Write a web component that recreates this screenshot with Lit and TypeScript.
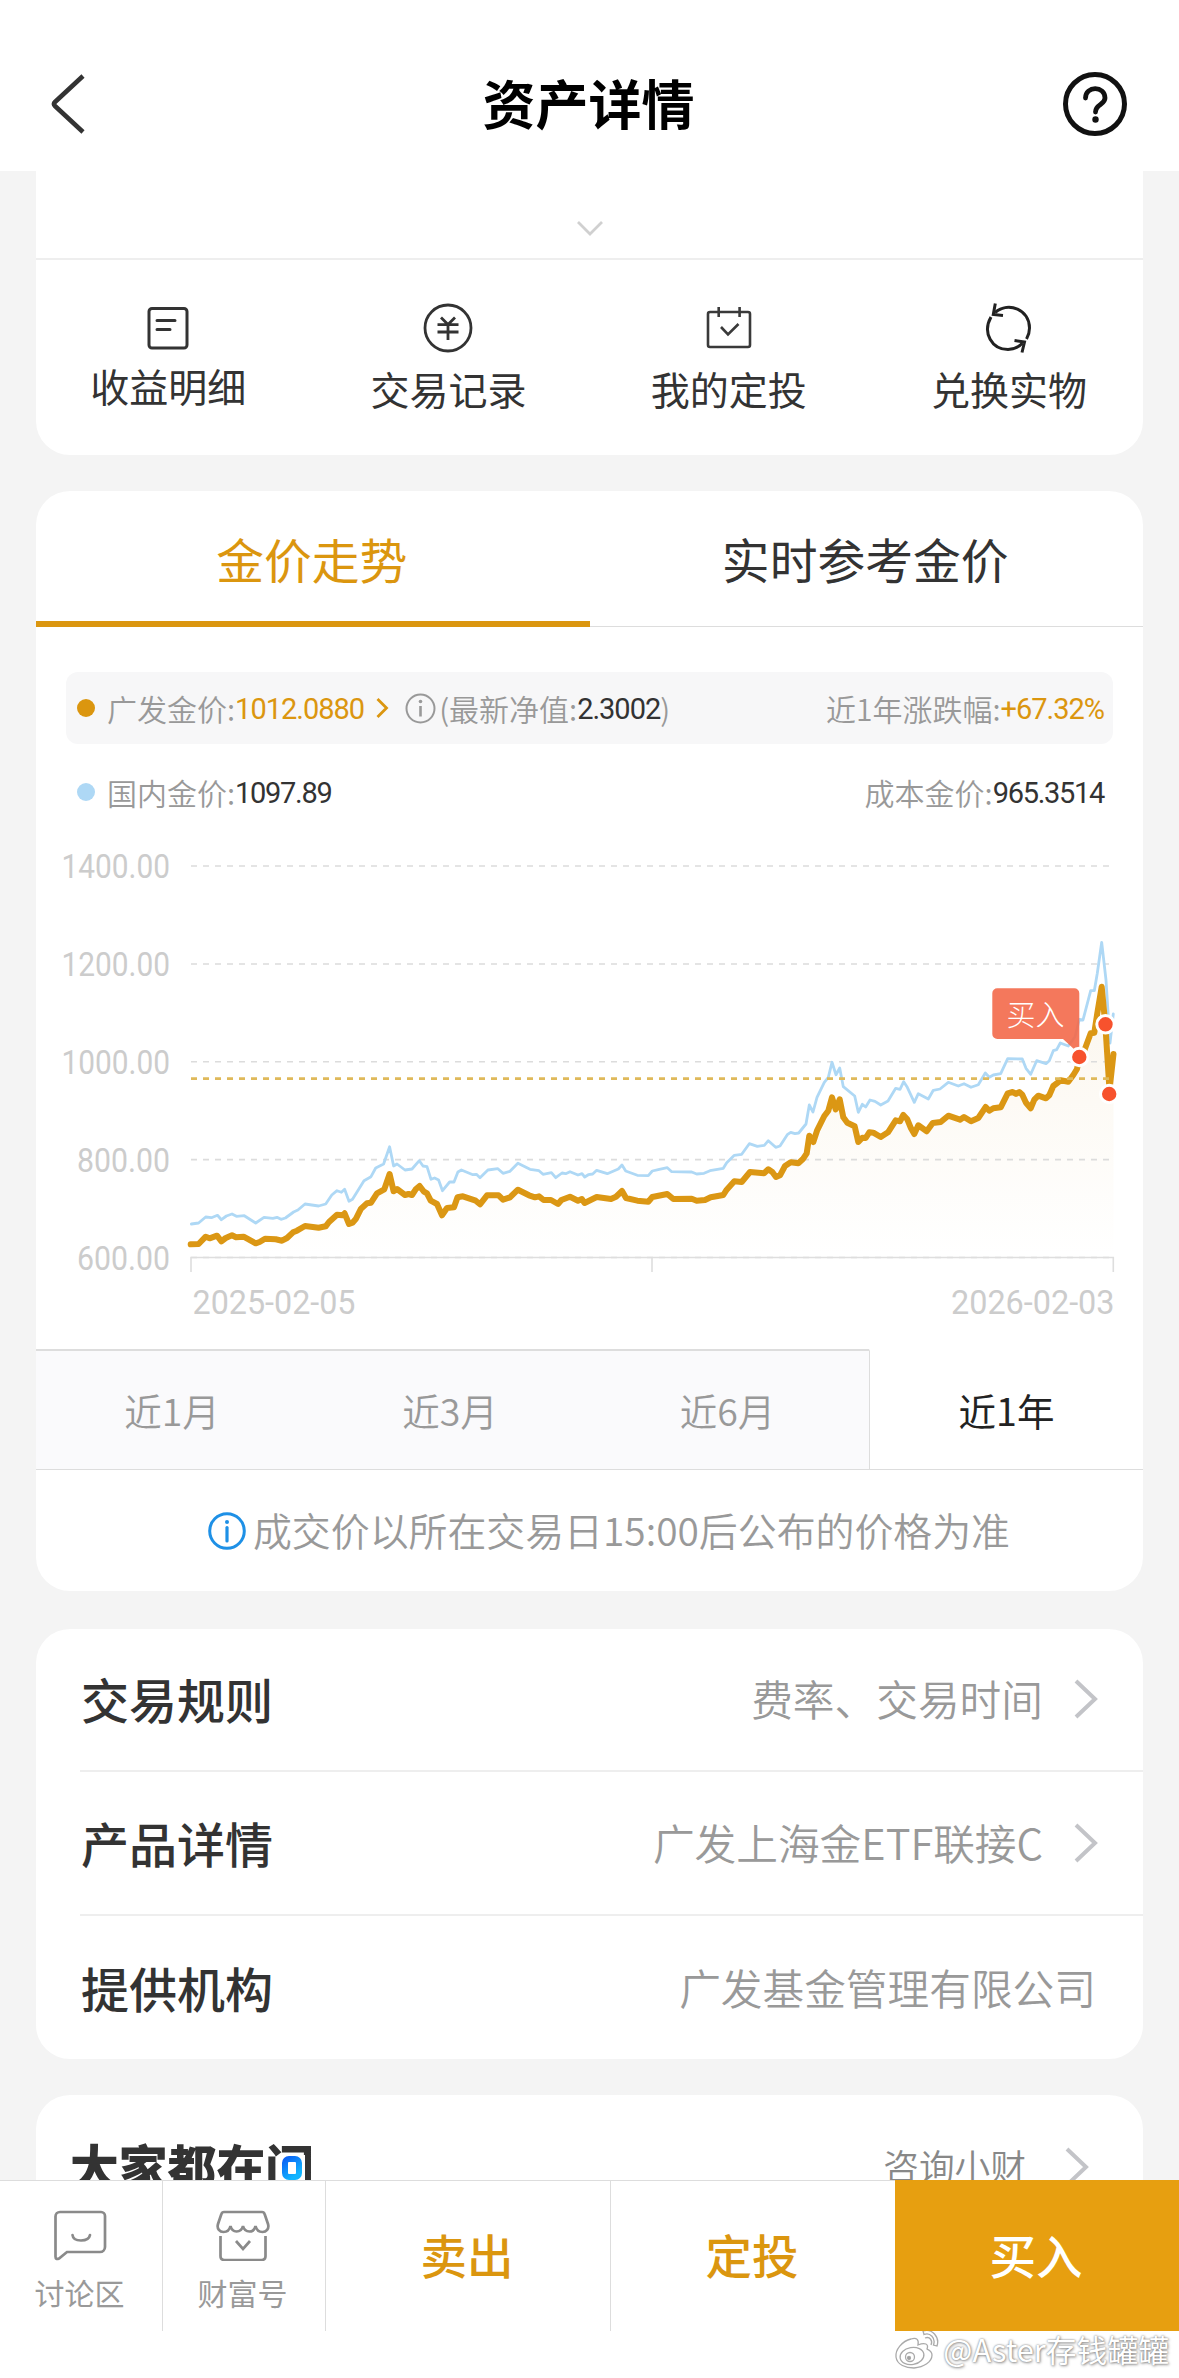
import { LitElement, html, svg, css } from "lit";
import { customElement } from "lit/decorators.js";

type Point = [number, number];

const toPoints = (flat: number[]): Point[] => {
  const out: Point[] = [];
  for (let i = 0; i < flat.length; i += 2) out.push([flat[i], flat[i + 1]]);
  return out;
};

const domestic = toPoints([
  191.4, 1224, 198.6, 1223, 205.7, 1217, 211.4, 1217.7, 217.5, 1215.3, 221.4, 1219.7, 226.4, 1216, 232, 1214,
  236.4, 1216.3, 244.3, 1215.7, 255.7, 1223, 264, 1217.3, 272.9, 1218.3, 277, 1217.3, 281, 1219.3, 285.4, 1218,
  293.6, 1212, 297.9, 1210, 305, 1204, 318.6, 1206, 325.7, 1204, 331.8, 1195, 337, 1190.7, 341.4, 1192.3,
  344.6, 1189.3, 349, 1201.3, 352.5, 1199.3, 364, 1180.7, 371, 1176.7, 375.7, 1168, 383.6, 1164, 389.6, 1146.7,
  393.6, 1166, 397, 1164, 405, 1170, 412, 1169, 419.3, 1160.7, 423, 1166, 427, 1166.7, 431, 1179.3,
  434.6, 1178, 438.6, 1180, 442.5, 1190.7, 449.6, 1182, 454, 1182, 457.9, 1172, 461.4, 1170, 472.9, 1174.7,
  476.4, 1174.3, 480, 1177.7, 487.9, 1170, 497.9, 1168.7, 503, 1173.3, 510, 1171.3, 517.9, 1163.3, 530, 1169.3,
  539, 1170.7, 543, 1174.3, 551.4, 1172.7, 555.7, 1177.7, 562, 1173, 565.7, 1173.7, 570, 1171.7, 578, 1175,
  582, 1173.7, 584.7, 1177, 588.3, 1174.7, 592.7, 1174, 596.7, 1170.3, 607.3, 1173.7, 618.3, 1169, 622, 1165,
  625.7, 1171, 637.3, 1175.3, 648.3, 1175.7, 652.3, 1171, 659.3, 1169.3, 667.3, 1167.7, 671.7, 1171.7,
  691.7, 1172, 696.7, 1174, 704, 1173.3, 710, 1170.7, 723.3, 1168.3, 726.7, 1162.7, 734.3, 1155.3,
  741.7, 1154.3, 749.3, 1143.7, 757.3, 1146.3, 764.3, 1145.3, 768.3, 1140.7, 775.7, 1147.3, 780, 1146,
  787.3, 1134.7, 790.7, 1132.3, 795, 1133.7, 798.7, 1133, 806, 1124, 809.3, 1105, 813, 1112, 817, 1097.3,
  824.3, 1082.3, 828.3, 1077.3, 832, 1062.3, 836, 1074.7, 839.7, 1068, 843.3, 1086.7, 854.7, 1096,
  858.3, 1112.3, 862.3, 1104.3, 865.7, 1107, 870, 1100, 875, 1101.3, 880.7, 1105, 888, 1101, 895.7, 1088.3,
  900, 1089.3, 903.7, 1081.7, 907.3, 1087.3, 914.3, 1102.3, 918.3, 1093.7, 928.3, 1099, 933.3, 1090.3,
  940, 1089, 948.3, 1082.3, 958.3, 1086, 964, 1083.7, 971, 1087.3, 978.3, 1084.7, 985.3, 1073, 989.3, 1077.3,
  993.3, 1075, 1000.7, 1073.7, 1007.7, 1058.7, 1022.3, 1059, 1026, 1068.3, 1030.7, 1074.3, 1036.7, 1060.7,
  1046, 1063.7, 1049.3, 1060.7, 1053.3, 1050.7, 1056.7, 1049.7, 1060.3, 1043, 1068.3, 1046, 1075, 1036.7,
  1079.3, 1019.3, 1083, 1020, 1090.7, 990.7, 1094.3, 990.7, 1097.3, 973.3, 1101.7, 942.3, 1106, 980,
  1110, 1043, 1113.3, 1014,
]);

const fund = toPoints([
  190.7, 1244.3, 198.6, 1244, 205.7, 1236.7, 209.6, 1238.3, 217, 1235.7, 221.4, 1241.3, 225.7, 1238, 232, 1235.3,
  236, 1237.3, 243.6, 1236.7, 255.7, 1243.3, 259.6, 1242, 265, 1238.7, 275.7, 1239.3, 282, 1240.7, 287, 1238,
  293, 1232.3, 297, 1230.7, 305, 1226, 318.6, 1227.7, 325.7, 1226.3, 329, 1222, 337, 1214.7, 342.5, 1215.3,
  344.6, 1213.3, 349, 1224, 352.5, 1222.7, 356, 1218.7, 361, 1208.7, 367, 1203.3, 371, 1202.7, 377, 1193.3,
  384.3, 1189.3, 389.6, 1174, 393.6, 1191.3, 397, 1189, 405, 1195, 408.6, 1194, 412, 1195, 415.7, 1189.3,
  419.6, 1186, 423.6, 1191.3, 427, 1193.3, 430.7, 1200.7, 437, 1204, 442, 1215.3, 447, 1208, 454, 1207.3,
  457.5, 1197.3, 462.9, 1196.3, 475.7, 1200.7, 480, 1204.3, 487, 1195.3, 498.6, 1195.3, 503, 1199.7,
  510, 1197.3, 517.9, 1189.7, 529, 1195.3, 535, 1197.3, 539, 1196.3, 543.6, 1200, 551, 1200, 558, 1204,
  561.4, 1200, 570, 1196.7, 578, 1200.7, 581.8, 1199, 584.6, 1203, 596.7, 1197, 611, 1199, 616, 1196.7,
  622, 1191, 626, 1198, 637.3, 1200.7, 648.3, 1201.7, 652.3, 1197, 667.3, 1194, 673.3, 1199, 691.7, 1198.7,
  696.7, 1200.7, 705, 1200, 710.7, 1197.3, 723.3, 1195, 726.7, 1189.7, 734.3, 1181.3, 741.7, 1182, 750, 1172,
  764, 1173.3, 768.3, 1169.3, 772.3, 1172, 776, 1177, 780, 1175.3, 785, 1166, 790.7, 1162.3, 798.3, 1163.3,
  802.7, 1159.3, 806.7, 1153.3, 809.3, 1135.7, 813.3, 1142, 817, 1130.7, 824.3, 1116, 828.3, 1110.7,
  832, 1097.3, 835.7, 1109.3, 839.7, 1099.3, 843.3, 1117.3, 847.3, 1122.7, 854.7, 1126.3, 858.3, 1142,
  862.3, 1137.7, 865.7, 1138, 869.3, 1132.3, 873.3, 1132.7, 880.7, 1137, 888, 1132.3, 895.7, 1120.3,
  900, 1121.3, 903.3, 1115, 907.3, 1119.3, 911, 1128.3, 914.3, 1134, 918.3, 1125.3, 926.7, 1131.3,
  932.7, 1123, 940.7, 1122, 948.3, 1115.7, 960, 1119.7, 964, 1117, 971, 1121.3, 978.3, 1118, 985.7, 1107,
  989.3, 1110.7, 993.3, 1108.3, 1000.7, 1107.3, 1007.7, 1093.3, 1012.7, 1092, 1016, 1094, 1019.3, 1092,
  1022.3, 1094.7, 1026, 1102.7, 1030.7, 1108.3, 1034.3, 1099.7, 1038.3, 1095.7, 1046, 1098.3, 1049.3, 1095.3,
  1053.3, 1086, 1060.7, 1080.3, 1068.3, 1081.7, 1073.3, 1075, 1077, 1069, 1079.3, 1056.7, 1083.3, 1053.3,
  1090.7, 1033.3, 1094.3, 1032.7, 1097.3, 1013.3, 1101.7, 986.7, 1105.3, 1024.3, 1109.5, 1090, 1113.5, 1054,
]);

const join = (pts: Point[]) => pts.map((p) => p.join(",")).join(" ");

const arrow = html`<svg class="arrow" width="26" height="40" viewBox="0 0 26 40">
  <path d="M3 2 L22 20 L3 38" fill="none" stroke="#c3c4c8" stroke-width="4" />
</svg>`;

@customElement("price-chart")
export class PriceChart extends LitElement {
  static styles = css`
    :host { display: block; }
    svg { display: block; }
    .axis { font-family: Roboto, "Noto Sans CJK SC", sans-serif; font-size: 33px; fill: #ccc; }
    .tip { font-family: "Noto Sans CJK SC", sans-serif; font-size: 29px; font-weight: 300; fill: #fff; }
  `;

  render() {
    const grid: [number, string, number][] = [
      [866, "1400.00", 108.5], [964, "1200.00", 108.5], [1061.7, "1000.00", 108.5], [1159.6, "800.00", 93], [1257.5, "600.00", 93],
    ];
    const marks: Point[] = [[1079.3, 1057], [1105.5, 1024.3], [1109.2, 1094]];
    return html`<svg width="1107" height="518" viewBox="36 832 1107 518">
      <defs>
        <linearGradient id="fade" gradientUnits="userSpaceOnUse" x1="0" y1="990" x2="0" y2="1257">
          <stop offset="0" stop-color="#d9a03d" stop-opacity="0.09" />
          <stop offset="1" stop-color="#d9a03d" stop-opacity="0" />
        </linearGradient>
      </defs>
      <polygon points="191,1257 ${join(fund)} 1113.5,1257" fill="url(#fade)" />
      ${grid.map(([y, label, w]) => svg`
        <line x1="191" x2="1110" y1=${y} y2=${y} stroke="#dcdcdc" stroke-width="1.6" stroke-dasharray="6 6" />
        <text class="axis" x=${170 - w} y=${y + 12.3} textLength=${w} lengthAdjust="spacingAndGlyphs">${label}</text>`)}
      <path d="M191 1272 V1257.5 H1113.3 V1272 M652 1257.5 V1272" fill="none" stroke="#dedede" stroke-width="1.6" />
      <polyline points=${join(domestic)} fill="none" stroke="#aed8f5" stroke-width="2.8" stroke-linejoin="round" stroke-linecap="round" />
      <polyline points=${join(fund)} fill="none" stroke="#db9714" stroke-width="6" stroke-linejoin="round" stroke-linecap="round" />
      <line x1="191" x2="1110" y1="1078.7" y2="1078.7" stroke="#dfb95a" stroke-width="2.8" stroke-dasharray="6 6" />
      <text class="axis" x="192.5" y="1313.5" textLength="163" lengthAdjust="spacingAndGlyphs">2025-02-05</text>
      <text class="axis" x="951" y="1313.5" textLength="163.5" lengthAdjust="spacingAndGlyphs">2026-02-03</text>
      <path d="M997.3 988.3 H1074.3 a5 5 0 0 1 5 5 V1054 L1063 1039 H997.3 a5 5 0 0 1 -5 -5 V993.3 a5 5 0 0 1 5 -5 Z" fill="#f3694a" fill-opacity="0.9" />
      <text class="tip" x="1006.5" y="1026">买入</text>
      ${marks.map(([x, y]) => svg`<circle cx=${x} cy=${y} r="8.7" fill="#f7522d" stroke="#fff" stroke-width="3" />`)}
    </svg>`;
  }
}

@customElement("app-root")
export class AppRoot extends LitElement {
  static styles = css`
    :host {
      display: block; width: 1179px; height: 2378px; overflow: hidden; background: #f4f4f4; color: #333;
      font-family: "Noto Sans CJK SC", sans-serif;
    }
    * { box-sizing: border-box; }
    svg { display: block; flex: none; }
    .page { display: flex; flex-direction: column; height: 2378px; }
    .header { height: 171px; background: #fff; display: flex; align-items: center; justify-content: space-between; padding: 37px 51px 0 48px; flex: none; }
    .title { font-size: 53px; line-height: 60px; font-weight: 700; color: #000; margin: -4px 0 0 27px; }
    .scroll { flex: 1; overflow: hidden; padding: 0 36px; display: flex; flex-direction: column; min-height: 0; }
    .card { background: #fff; border-radius: 34px; flex: none; overflow: hidden; }
    .top { height: 284px; border-radius: 0 0 34px 34px; margin-bottom: 36px; }
    .fold { height: 89px; display: flex; justify-content: center; align-items: flex-end; padding-bottom: 21px; border-bottom: 2px solid #eee; }
    .actions { display: grid; grid-template-columns: repeat(4, 280.3px); margin-left: -8px; }
    .action { display: flex; flex-direction: column; align-items: center; padding-top: 42px; font-size: 39px; line-height: 44px; }
    .action span { margin-top: 12px; }
    .action:first-child span { margin-top: 9px; }
    .trend { height: 1100px; margin-bottom: 38px; }
    .tabs { display: grid; grid-template-columns: 1fr 1fr; height: 136px; font-size: 47.8px; line-height: 136px; text-align: center; border-bottom: 1px solid #ddd; }
    .tab { height: 136px; padding-right: 2px; }
    .tab.on { color: #db960f; border-bottom: 6px solid #db960f; }
    .legend { margin: 45px 30px 0; height: 72px; border-radius: 12px; display: flex; align-items: center; padding: 0 9px 0 11px; font-size: 30px; line-height: 40px; color: #999; font-weight: 350; white-space: nowrap; }
    .legend.fill { background: #f7f7f8; }
    .legend.plain { margin-top: 12px; height: 72px; margin-bottom: 4px; }
    .dot { width: 18px; height: 18px; border-radius: 50%; background: #db960f; margin-right: 12px; }
    .dot.blue { background: #aed8f5; }
    .num { font-family: Roboto, sans-serif; font-weight: 400; font-size: 29px; letter-spacing: -1px; color: #333; position: relative; top: 1px; }
    .plain .num { letter-spacing: -1.3px; }
    .gold { color: #db960f; }
    .more { margin: 0 16px 0 12px; }
    .paren { margin-left: 3px; }
    .right { margin-left: auto; }
    .ranges { display: grid; grid-template-columns: 278px 278px 277px 1fr; height: 121px; border-bottom: 2px solid #ddd; font-size: 37.5px; line-height: 118px; text-align: center; color: #999; margin-top: -1px; }
    .range { background: #fafafc; border-top: 2px solid #ddd; padding-right: 6px; font-weight: 350; }
    .range.on { background: #fff; color: #222; border-top-color: #fff; border-left: 1px solid #ddd; font-weight: 400; padding-right: 0; }
    .note { display: flex; justify-content: center; align-items: center; height: 121px; font-size: 38.9px; color: #999; font-weight: 350; gap: 7px; padding-left: 39px; white-space: nowrap; }
    .note span { margin-top: -3px; }
    .list { height: 430px; margin-bottom: 36px; padding-left: 44px; }
    .row { height: 144px; display: flex; align-items: center; justify-content: space-between; padding: 0 44px 3px 0; border-bottom: 2px solid #eee; font-size: 41.7px; color: #999; font-weight: 350; }
    .row:first-child { height: 143px; }
    .row:last-child { border-bottom: 0; padding-right: 47px; }
    .name { font-size: 48px; font-weight: 500; color: #333; margin-left: 1px; }
    .value { display: flex; align-items: center; gap: 30px; }
    .value .arrow { position: relative; top: 1px; }
    .ask { height: 180px; padding: 46px 53px 0 34px; display: flex; justify-content: space-between; align-items: flex-start; font-size: 35.7px; line-height: 48px; font-weight: 350; color: #888; }
    .asktitle { font-size: 48.8px; font-weight: 900; color: #333; position: relative; line-height: 48px; }
    .mouth { position: absolute; left: 209px; top: 14px; }
    .consult { display: flex; align-items: center; gap: 38px; }
    .consult .arrow { position: relative; top: 2px; }
    .bar { height: 151px; flex: none; background: #fff; border-top: 1px solid #ddd; display: grid; grid-template-columns: 163px 163px 285px 284px 284px; position: relative; }
    .cell { border-right: 1px solid #ddd; display: flex; flex-direction: column; align-items: center; padding: 28px 3px 0 0; font-size: 30px; line-height: 36px; color: #999; gap: 13px; }
    .buy { border-right: 1px solid #ddd; font-size: 46.5px; font-weight: 500; line-height: 146px; text-align: center; color: #db960f; padding-right: 2px; }
    .buy.last { border: 0; }
    .buy.main { background: #e79f10; color: #fff; border: 0; margin-top: -1px; line-height: 148px; }
    .foot { height: 47px; flex: none; background: #fff; display: flex; justify-content: flex-end; align-items: center; padding: 0 10px 12px 0; gap: 3px; font-size: 30.8px; line-height: 35px; color: #fff; text-shadow: 0 0 2px #777, 1px 1px 3px #999; }
  `;

  render() {
    return html`<div class="page">
      <div class="header">
        <svg width="40" height="60" viewBox="0 0 40 60"><path d="M35 2 L7 28 Q5 30 7 32 L35 58" fill="none" stroke="#333" stroke-width="4.6" /></svg>
        <div class="title">资产详情</div>
        <svg width="66" height="66" viewBox="0 0 66 66">
          <circle cx="33" cy="33" r="29.5" fill="none" stroke="#111" stroke-width="5" />
          <path d="M23.5 27 C23.5 14.5 43 14.5 43 27 C43 34 33.5 33 33.5 41" fill="none" stroke="#111" stroke-width="4.8" stroke-linecap="round" />
          <circle cx="33.5" cy="48.5" r="3.2" fill="#111" />
        </svg>
      </div>
      <div class="scroll">
        <div class="card top">
          <div class="fold"><svg width="28" height="17" viewBox="0 0 28 17"><path d="M2 2 L14 14 L26 2" fill="none" stroke="#d0d0d0" stroke-width="2.8" /></svg></div>
          <div class="actions">
            <div class="action">
              <svg width="52" height="52" viewBox="0 0 52 52" fill="none" stroke="#333" stroke-width="3"><rect x="7" y="6.5" width="38" height="39.5" rx="3" /><path d="M15 18.5 H33 M15 27.5 H28" stroke-linecap="round" /></svg>
              <span>收益明细</span>
            </div>
            <div class="action">
              <svg width="52" height="52" viewBox="0 0 52 52" fill="none" stroke="#333" stroke-width="2.8"><circle cx="26" cy="26" r="23" /><path d="M19 15.5 L26 22.5 L33 15.5 M26 22.5 V38 M15.5 22.7 H36.5 M15.5 30 H36.5" /></svg>
              <span>交易记录</span>
            </div>
            <div class="action">
              <svg width="52" height="52" viewBox="0 0 52 52" fill="none" stroke="#3a3a3a" stroke-width="2.6"><rect x="5" y="10" width="42" height="35" rx="2" /><path d="M15.7 5 V15 M36.6 5 V15 M18 25 L25 32.5 L35.5 22" /></svg>
              <span>我的定投</span>
            </div>
            <div class="action">
              <svg width="52" height="52" viewBox="0 0 52 52" fill="none" stroke="#222" stroke-width="3"><path d="M12 10.5 C26 -1 46.500 8 46.500 26 C46.500 30 45.300 34 43.500 37" /><path d="M8 15 C-1 31 9 47.500 25 47.500 C31 47.500 36.500 44.500 39.500 41" /><path d="M12.300 1.500 L10.300 12.500 L20 13.500" /><path d="M31.500 38.500 L41.500 40 L39 50.500" /></svg>
              <span>兑换实物</span>
            </div>
          </div>
        </div>

        <div class="card trend">
          <div class="tabs"><div class="tab on">金价走势</div><div class="tab">实时参考金价</div></div>
          <div class="legend fill">
            <i class="dot"></i><span>广发金价:</span><span class="num gold">1012.0880</span>
            <svg class="more" width="13" height="20" viewBox="0 0 13 20"><path d="M1.500 1 L10.500 10 L1.500 19" fill="none" stroke="#db960f" stroke-width="2.800" /></svg>
            <svg width="31" height="31" viewBox="0 0 31 31"><circle cx="15.500" cy="15.500" r="14" fill="none" stroke="#999" stroke-width="2" /><path d="M15.500 13 V23.500" stroke="#999" stroke-width="2.600" /><circle cx="15.500" cy="8.500" r="1.800" fill="#999" /></svg>
            <span class="paren">(最新净值:</span><span class="num">2.3002</span><span>)</span>
            <span class="right">近1年涨跌幅:</span><span class="num gold">+67.32%</span>
          </div>
          <div class="legend plain">
            <i class="dot blue"></i><span>国内金价:</span><span class="num">1097.89</span>
            <span class="right">成本金价:</span><span class="num">965.3514</span>
          </div>
          <price-chart></price-chart>
          <div class="ranges">
            <div class="range">近1月</div><div class="range">近3月</div><div class="range">近6月</div><div class="range on">近1年</div>
          </div>
          <div class="note">
            <svg width="38" height="38" viewBox="0 0 38 38"><circle cx="19" cy="19" r="17.300" fill="none" stroke="#1e90e6" stroke-width="3" /><path d="M19 15.500 V29" stroke="#1e90e6" stroke-width="3.200" stroke-linecap="round" /><circle cx="19" cy="10" r="2" fill="#1e90e6" /></svg>
            <span>成交价以所在交易日15:00后公布的价格为准</span>
          </div>
        </div>

        <div class="card list">
          <div class="row"><span class="name">交易规则</span><span class="value">费率、交易时间${arrow}</span></div>
          <div class="row"><span class="name">产品详情</span><span class="value">广发上海金ETF联接C${arrow}</span></div>
          <div class="row"><span class="name">提供机构</span><span class="value">广发基金管理有限公司</span></div>
        </div>

        <div class="card ask">
          <div class="asktitle">大家都在问
            <svg class="mouth" width="26" height="28" viewBox="0 0 26 28">
              <defs><linearGradient id="ask" x1="0" y1="0" x2="0.600" y2="1"><stop offset="0" stop-color="#0a63f5" /><stop offset="1" stop-color="#10b4ff" /></linearGradient></defs>
              <rect width="26" height="28" fill="#fff" />
              <rect x="6" y="4" width="14" height="18" rx="4" fill="none" stroke="url(#ask)" stroke-width="6" />
            </svg>
          </div>
          <div class="consult">咨询小财${arrow}</div>
        </div>
      </div>

      <div class="bar">
        <div class="cell">
          <svg width="54" height="52" viewBox="0 0 54 52" fill="none" stroke="#8a8a8a" stroke-width="2.700"><path d="M7 3 H48 a4 4 0 0 1 4 4 V38 a5 5 0 0 1 -5 5 H14 L6 49.500 Q2.500 51 2.500 47.500 V7.500 a4.500 4.500 0 0 1 4.500 -4.500 Z" /><path d="M19.500 26 Q20 31.500 28 31.500 Q36 31.500 37 26" stroke-linecap="round" /></svg>
          <span>讨论区</span>
        </div>
        <div class="cell">
          <svg width="54" height="52" viewBox="0 0 54 52" fill="none" stroke="#8a8a8a" stroke-width="2.700"><path d="M8 3 H46 Q48 3 48.600 5 L52 15 C53.500 20 50 23 46.500 23 C43 23 40.500 21 39.500 17 C38.500 21 36 22.500 33.500 22.500 C30.500 22.500 28 21 27 17 C26 21 23.500 22.500 20.500 22.500 C18 22.500 15.500 21 14.500 17 C13.500 21 11 23 7.500 23 C4 23 0.500 20 2 15 L5.400 5 Q6 3 8 3 Z" /><path d="M4.500 27 V47 Q4.500 51 8.500 51 H45.500 Q49.500 51 49.500 47 V27" /><path d="M20 32 L27 40 L34 32" /></svg>
          <span>财富号</span>
        </div>
        <div class="buy">卖出</div>
        <div class="buy last">定投</div>
        <div class="buy main">买入</div>
      </div>
      <div class="foot">
        <svg width="46" height="42" viewBox="0 0 46 42" fill="#fff" stroke="#aaa" stroke-width="1.300">
          <path d="M17 11 C8 13 1 22 2 29 C3 37 12 40 20 40 C30 39 38 34 38 27 C38 23 35 22 33 21 C35 16 31 14 24 17 C25 12 23 9 17 11 Z" />
          <ellipse cx="18" cy="28" rx="12" ry="8.500" transform="rotate(-10 18 28)" />
          <circle cx="16" cy="29" r="4.500" /><circle cx="15" cy="30" r="1.500" fill="#999" />
          <path d="M29 3 C38 0 46 9 43 18 L39.500 17 C42 10 36 4 30 6.500 Z" />
          <path d="M31 10 C36 8 39 13 37 17" fill="none" />
        </svg>
        <span>@Aster存钱罐罐</span>
      </div>
    </div>`;
  }
}
